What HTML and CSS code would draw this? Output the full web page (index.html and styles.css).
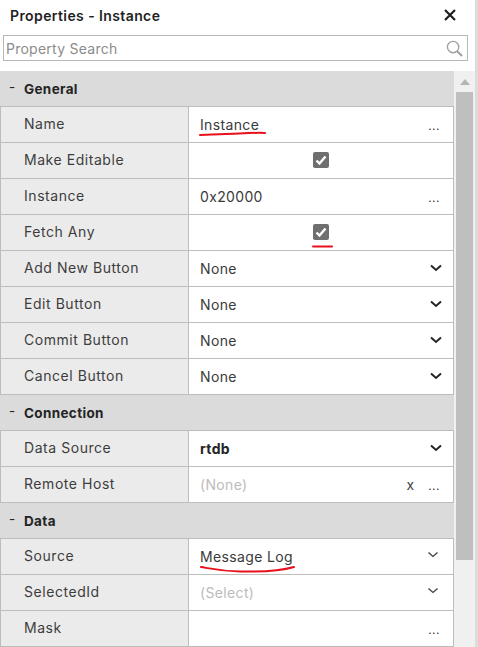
FILE: index.html
```html
<!DOCTYPE html>
<html lang="en">
<head>
<meta charset="utf-8">
<title>Properties - Instance</title>
<link rel="stylesheet" href="styles.css">
</head>
<body>
<div class="panel">
  <header class="title-bar">
    <h1 class="title">Properties - Instance</h1>
    <svg class="close" width="12" height="12" viewBox="0 0 12 12"><path d="M1 1l10 10M11 1L1 11" stroke="#1f1f1f" stroke-width="2.2" fill="none"/></svg>
  </header>
  <div class="search">
    <span class="search-text">Property Search</span>
    <svg class="search-icon" width="17" height="17" viewBox="0 0 18 18"><circle cx="7.5" cy="7.5" r="6" stroke="#a0a0a0" stroke-width="1.400" fill="none"/><path d="M11.8 11.8L17 17" stroke="#a0a0a0" stroke-width="2.200" fill="none"/></svg>
  </div>
  <div class="body">
    <div class="grid">
      <div class="group"><span class="minus">-</span>General</div>
      <div class="row"><div class="label">Name</div><div class="value"><span class="text">Instance</span><span class="dots">...</span>
        <svg class="ink ink-name" width="68" height="6" viewBox="0 0 68 6"><path d="M1 4C20 3 30 3 40 2.500S60 1.500 66 2" stroke="#e8101a" stroke-width="2" fill="none" stroke-linecap="round"/></svg></div></div>
      <div class="row"><div class="label">Make Editable</div><div class="value center"><span class="check"><svg width="16" height="16" viewBox="0 0 16 16"><path d="M3.500 8.500L6.500 11.500L12.500 4.500" stroke="#fff" stroke-width="2.400" fill="none"/></svg></span></div></div>
      <div class="row"><div class="label">Instance</div><div class="value"><span class="text">0x20000</span><span class="dots">...</span></div></div>
      <div class="row"><div class="label">Fetch Any</div><div class="value center"><span class="check"><svg width="16" height="16" viewBox="0 0 16 16"><path d="M3.500 8.500L6.500 11.500L12.500 4.500" stroke="#fff" stroke-width="2.400" fill="none"/></svg></span>
        <svg class="ink ink-fetch" width="21" height="3" viewBox="0 0 21 3"><path d="M1 1.500H20" stroke="#e8101a" stroke-width="2" fill="none" stroke-linecap="round"/></svg></div></div>
      <div class="row"><div class="label">Add New Button</div><div class="value"><span class="text">None</span><svg class="chev" width="12" height="8" viewBox="0 0 12 8"><path d="M1 1.500L6 6L11 1.500" stroke="#262626" stroke-width="2" fill="none"/></svg></div></div>
      <div class="row"><div class="label">Edit Button</div><div class="value"><span class="text">None</span><svg class="chev" width="12" height="8" viewBox="0 0 12 8"><path d="M1 1.500L6 6L11 1.500" stroke="#262626" stroke-width="2" fill="none"/></svg></div></div>
      <div class="row"><div class="label">Commit Button</div><div class="value"><span class="text">None</span><svg class="chev" width="12" height="8" viewBox="0 0 12 8"><path d="M1 1.500L6 6L11 1.500" stroke="#262626" stroke-width="2" fill="none"/></svg></div></div>
      <div class="row"><div class="label">Cancel Button</div><div class="value"><span class="text">None</span><svg class="chev" width="12" height="8" viewBox="0 0 12 8"><path d="M1 1.500L6 6L11 1.500" stroke="#262626" stroke-width="2" fill="none"/></svg></div></div>
      <div class="group"><span class="minus">-</span>Connection</div>
      <div class="row"><div class="label">Data Source</div><div class="value"><span class="text bold">rtdb</span><svg class="chev" width="12" height="8" viewBox="0 0 12 8"><path d="M1 1.500L6 6L11 1.500" stroke="#262626" stroke-width="2" fill="none"/></svg></div></div>
      <div class="row"><div class="label">Remote Host</div><div class="value"><span class="text muted">(None)</span><span class="clear">x</span><span class="dots">...</span></div></div>
      <div class="group"><span class="minus">-</span>Data</div>
      <div class="row"><div class="label">Source</div><div class="value"><span class="text">Message Log</span><svg class="chev thin" width="12" height="8" viewBox="0 0 12 8"><path d="M1.500 1.500L6 5.500L10.500 1.500" stroke="#404040" stroke-width="1.300" fill="none"/></svg>
        <svg class="ink ink-source" width="96" height="9" viewBox="0 0 96 9"><path d="M1 2C10 3.500 20 6 40 6.500S80 6 94 2" stroke="#e8101a" stroke-width="2" fill="none" stroke-linecap="round"/></svg></div></div>
      <div class="row"><div class="label">SelectedId</div><div class="value"><span class="text muted">(Select)</span><svg class="chev thin" width="12" height="8" viewBox="0 0 12 8"><path d="M1.500 1.500L6 5.500L10.500 1.500" stroke="#404040" stroke-width="1.300" fill="none"/></svg></div></div>
      <div class="row"><div class="label">Mask</div><div class="value"><span class="text"></span><span class="dots">...</span></div></div>
    </div>
    <div class="scrollbar">
      <div class="scroll-up"><svg width="10" height="6" viewBox="0 0 10 6"><path d="M5 0L10 6H0Z" fill="#b5b5b5"/></svg></div>
      <div class="thumb"></div>
    </div>
  </div>
</div>
</body>
</html>
```
FILE: styles.css
```css
* { box-sizing: border-box; }
html, body { margin: 0; padding: 0; height: 100%; overflow: hidden; background: #fff; }
body { font-family: "Inter", "Open Sans", sans-serif; font-size: 14px; color: #3a3a3a; }
.panel { width: 478px; height: 647px; border-right: 3px solid #dcdcdc; display: flex; flex-direction: column; overflow: hidden; }
.title-bar { height: 35px; flex: none; display: flex; align-items: center; justify-content: space-between; padding: 0 19px 5px 10px; }
.title { margin: 0; font-size: 14px; font-weight: 600; letter-spacing: 0.400px; color: #1f1f1f; }
.close { display: block; }
.search { flex: none; height: 26px; margin: 0 7px 0 3px; border: 1px solid #b8b8b8; display: flex; align-items: center; justify-content: space-between; padding: 0 4px 0 2px; }
.search-text { color: #8c8c8c; font-size: 14px; letter-spacing: 0.250px; }
.search-icon { display: block; margin-top: 1px; }
.body { flex: none; margin-top: 10px; display: flex; height: 576px; }
.grid { width: 454px; flex: none; }
.group { height: 35px; background: #dbdbdb; display: flex; align-items: center; font-weight: 700; font-size: 13.500px; letter-spacing: 0.350px; color: #242424; }
.minus { width: 24px; padding-left: 9px; font-weight: 400; margin-top: -3px; }
.row { height: 36px; display: flex; border-top: 1px solid #bdbdbd; border-left: 1px solid #bdbdbd; border-right: 1px solid #bdbdbd; }
.row:has(+ .group), .row:last-child { height: 37px; border-bottom: 1px solid #bdbdbd; }
.label { width: 188px; flex: none; background: #ebebeb; border-right: 1px solid #bdbdbd; padding: 0 0 2px 23px; display: flex; align-items: center; color: #3d3d3d; letter-spacing: 0.550px; }
.value { flex: 1; position: relative; display: flex; align-items: center; padding: 0 13px 0 11px; background: #fff; }
.value.center { justify-content: center; padding: 0 0 2px 0; }
.text { flex: 1; color: #3a3a3a; letter-spacing: 0.350px; }
.bold { font-weight: 700; color: #262626; }
.muted { color: #bcbcbc; }
.dots { letter-spacing: 0.500px; font-size: 12px; color: #333; margin-top: 2px; }
.clear { margin-right: 14px; color: #444; }
.chev { display: block; margin-right: -2px; margin-top: -1px; }
.chev.thin { margin-right: 1px; margin-top: -3px; }
.check { width: 16px; height: 16px; background: #6f6f6f; border-radius: 2px; display: block; }
.check svg { display: block; }
.ink { position: absolute; display: block; }
.ink-name { left: 10px; top: 24px; }
.ink-fetch { left: 123px; top: 30px; }
.ink-source { left: 11px; top: 26px; }
.scrollbar { flex: 1; background: #f0f0f0; display: flex; flex-direction: column; align-items: center; }
.scroll-up { height: 21px; width: 100%; display: flex; justify-content: center; align-items: center; }
.thumb { width: 17px; height: 468px; background: #bfbfbf; }
```
